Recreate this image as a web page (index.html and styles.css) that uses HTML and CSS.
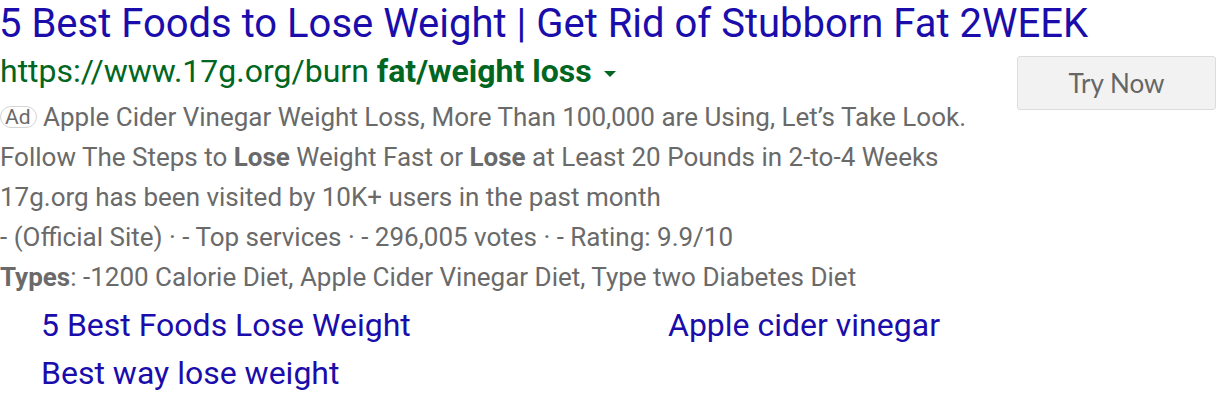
FILE: index.html
```html
<!DOCTYPE html>
<html>
<head>
<meta charset="utf-8">
<link rel="stylesheet" href="styles.css">
</head>
<body>
<div class="ad">
  <div class="main">
    <div class="title">5 Best Foods to Lose Weight | Get Rid of Stubborn Fat 2WEEK</div>
    <div class="url">https://www.17g.org/burn <b>fat/weight loss</b><span class="caret"></span></div>
    <div class="desc">
      <div class="line"><span class="badge">Ad</span> Apple Cider Vinegar Weight Loss, More Than 100,000 are Using, Let’s Take Look.</div>
      <div class="line">Follow The Steps to <b>Lose</b> Weight Fast or <b>Lose</b> at Least 20 Pounds in 2-to-4 Weeks</div>
      <div class="line">17g.org has been visited by 10K+ users in the past month</div>
      <div class="line">- (Official Site) · - Top services · - 296,005 votes · - Rating: 9.9/10</div>
      <div class="line"><b>Types</b>: -1200 Calorie Diet, Apple Cider Vinegar Diet, Type two Diabetes Diet</div>
    </div>
    <div class="sitelinks">
      <a class="sl">5 Best Foods Lose Weight</a>
      <a class="sl">Apple cider vinegar</a>
      <a class="sl">Best way lose weight</a>
    </div>
  </div>
  <div class="btn">Try Now</div>
</div>
</body>
</html>
```
FILE: styles.css
```css
body { margin: 0; background: #fff; font-family: Roboto, "Liberation Sans", sans-serif; }
.ad { display: flex; justify-content: space-between; align-items: flex-start; padding-left: 2px; }
.main { min-width: 0; }
.title { color: #1a0dab; font-size: 40px; line-height: 48px; white-space: nowrap; margin-left: -3px; }
.url { color: #006621; font-size: 32px; line-height: 46px; margin-left: -2px; white-space: nowrap; }
.url b { font-weight: 700; }
.caret { display: inline-block; width: 0; height: 0; border-left: 6px solid transparent; border-right: 6px solid transparent; border-top: 6px solid #006621; margin-left: 12px; vertical-align: middle; }
.btn { margin-top: 56px; width: 199px; height: 54px; box-sizing: border-box; background: #f2f2f2; border: 1px solid #dcdcdc; border-radius: 3px; color: #666; font-family: Lato, "Open Sans", sans-serif; font-size: 26px; display: flex; align-items: center; justify-content: center; flex-shrink: 0; }
.desc { color: #6a6a6a; font-size: 26px; margin-top: 3px; }
.desc .line { line-height: 40px; white-space: nowrap; margin-left: -2px; }
.desc b { font-weight: 700; }
.badge { display: inline-block; border: 1px solid #d4d4d4; border-radius: 12px; font-size: 21px; line-height: 20px; padding: 0 5px 0 4px; vertical-align: 2px; }
.sitelinks { display: grid; grid-template-columns: 627px auto; margin-left: 39px; margin-top: 4px; }
.sl { color: #1a0dab; font-size: 32px; line-height: 48px; white-space: nowrap; }
```
